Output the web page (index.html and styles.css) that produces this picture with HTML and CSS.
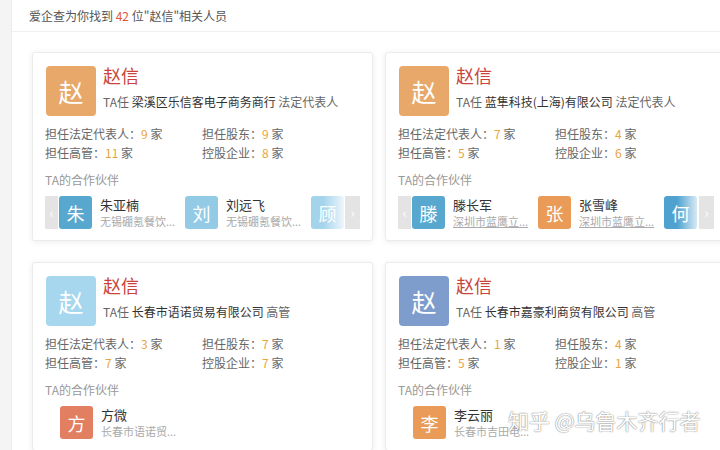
FILE: index.html
```html
<!DOCTYPE html>
<html lang="zh-CN">
<head>
<meta charset="utf-8">
<title>爱企查 - 赵信</title>
<link rel="stylesheet" href="styles.css">
</head>
<body>
<div class="page">
  <div class="strip"></div>
  <div class="panel">
    <div class="header">爱企查为你找到 <span class="count">42</span> 位"赵信"相关人员</div>
    <div class="grid">
      <div class="card">
        <div class="head">
          <div class="avatar orange">赵</div>
          <div class="info">
            <div class="name">赵信</div>
            <div class="role">TA任 <span class="company">梁溪区乐信客电子商务商行</span> 法定代表人</div>
          </div>
        </div>
        <div class="stats">
          <div>担任法定代表人：<span class="num">9</span> 家</div>
          <div>担任股东：<span class="num">9</span> 家</div>
          <div>担任高管：<span class="num">11</span> 家</div>
          <div>控股企业：<span class="num">8</span> 家</div>
        </div>
        <div class="label">TA的合作伙伴</div>
        <div class="carousel">
          <div class="arrow">‹</div>
          <div class="viewport fade">
            <div class="partner"><div class="pav blue">朱</div><div class="ptext"><div class="pname">朱亚楠</div><div class="psub">无锡硼氪餐饮...</div></div></div>
            <div class="partner"><div class="pav sky">刘</div><div class="ptext"><div class="pname">刘远飞</div><div class="psub">无锡硼氪餐饮...</div></div></div>
            <div class="partner"><div class="pav pale">顾</div></div>
          </div>
          <div class="arrow">›</div>
        </div>
      </div>

      <div class="card">
        <div class="head">
          <div class="avatar orange">赵</div>
          <div class="info">
            <div class="name">赵信</div>
            <div class="role">TA任 <span class="company">蓝隼科技(上海)有限公司</span> 法定代表人</div>
          </div>
        </div>
        <div class="stats">
          <div>担任法定代表人：<span class="num">7</span> 家</div>
          <div>担任股东：<span class="num">4</span> 家</div>
          <div>担任高管：<span class="num">5</span> 家</div>
          <div>控股企业：<span class="num">6</span> 家</div>
        </div>
        <div class="label">TA的合作伙伴</div>
        <div class="carousel">
          <div class="arrow">‹</div>
          <div class="viewport fade">
            <div class="partner"><div class="pav blue">滕</div><div class="ptext"><div class="pname">滕长军</div><div class="psub link">深圳市蓝鹰立...</div></div></div>
            <div class="partner"><div class="pav amber">张</div><div class="ptext"><div class="pname">张雪峰</div><div class="psub link">深圳市蓝鹰立...</div></div></div>
            <div class="partner"><div class="pav deep">何</div></div>
          </div>
          <div class="arrow">›</div>
        </div>
      </div>

      <div class="card">
        <div class="head">
          <div class="avatar light">赵</div>
          <div class="info">
            <div class="name">赵信</div>
            <div class="role">TA任 <span class="company">长春市语诺贸易有限公司</span> 高管</div>
          </div>
        </div>
        <div class="stats">
          <div>担任法定代表人：<span class="num">3</span> 家</div>
          <div>担任股东：<span class="num">7</span> 家</div>
          <div>担任高管：<span class="num">7</span> 家</div>
          <div>控股企业：<span class="num">7</span> 家</div>
        </div>
        <div class="label">TA的合作伙伴</div>
        <div class="carousel static">
          <div class="viewport">
            <div class="partner"><div class="pav salmon">方</div><div class="ptext"><div class="pname">方微</div><div class="psub">长春市语诺贸...</div></div></div>
          </div>
        </div>
      </div>

      <div class="card">
        <div class="head">
          <div class="avatar slate">赵</div>
          <div class="info">
            <div class="name">赵信</div>
            <div class="role">TA任 <span class="company">长春市嘉豪利商贸有限公司</span> 高管</div>
          </div>
        </div>
        <div class="stats">
          <div>担任法定代表人：<span class="num">1</span> 家</div>
          <div>担任股东：<span class="num">4</span> 家</div>
          <div>担任高管：<span class="num">5</span> 家</div>
          <div>控股企业：<span class="num">1</span> 家</div>
        </div>
        <div class="label">TA的合作伙伴</div>
        <div class="carousel static">
          <div class="viewport">
            <div class="partner"><div class="pav amber">李</div><div class="ptext"><div class="pname">李云丽</div><div class="psub">长春市吉田电...</div></div></div>
          </div>
        </div>
      </div>
    </div>
  </div>
</div>
<div class="watermark">知乎 @乌鲁木齐行者</div>
</body>
</html>
```
FILE: styles.css
```css
html, body {
  margin: 0;
  padding: 0;
  width: 720px;
  height: 450px;
  overflow: hidden;
  background: #ffffff;
  font-family: "Noto Sans CJK SC", "Liberation Sans", sans-serif;
  color: #666;
}

.page {
  display: flex;
  height: 450px;
}

.strip {
  width: 11px;
  flex: none;
  background: #f4f4f4;
  border-right: 1px solid #ececec;
}

.panel {
  flex: 1;
  min-width: 0;
  overflow: hidden;
  background: #fff;
}

.header {
  height: 31px;
  line-height: 31px;
  padding-left: 17px;
  font-size: 12px;
  color: #555;
  border-bottom: 1px solid #f0f0f0;
  white-space: nowrap;
}

.count {
  color: #e2573b;
}

.grid {
  display: grid;
  grid-template-columns: 341px 342px;
  column-gap: 12px;
  row-gap: 21px;
  padding: 20px 0 0 20px;
}

.card {
  border: 1px solid #ececec;
  border-radius: 3px;
  box-shadow: 0 1px 6px rgba(0, 0, 0, 0.08);
  padding: 13px 12px 11px 12px;
  background: #fff;
}

.head {
  display: flex;
  align-items: flex-start;
}

.avatar {
  width: 50px;
  height: 50px;
  border-radius: 4px;
  flex: none;
  display: flex;
  align-items: center;
  justify-content: center;
  color: #fff;
  font-size: 25px;
  line-height: 1;
  margin-left: 1px;
}

.orange { background: #e8a86a; }
.light { background: #a6d7ee; }
.slate { background: #7e9dcd; }

.info {
  margin-left: 7px;
  min-width: 0;
}

.name {
  font-size: 18px;
  line-height: 18px;
  color: #c9453b;
}

.role {
  margin-top: 9px;
  font-size: 12px;
  line-height: 18px;
  color: #666;
  white-space: nowrap;
}

.company {
  color: #333;
}

.stats {
  display: grid;
  grid-template-columns: 157px 1fr;
  margin-top: 8px;
  font-size: 12px;
  line-height: 19px;
  color: #666;
}

.num {
  color: #e8a53d;
}

.label {
  margin-top: 9px;
  font-size: 12px;
  line-height: 18px;
  color: #999;
}

.carousel {
  display: flex;
  height: 33px;
  margin-top: 7px;
}

.carousel.static {
  padding-left: 14px;
}

.arrow {
  flex: none;
  width: 13px;
  height: 33px;
  background: #e4e4e4;
  color: #fff;
  font-size: 14px;
  line-height: 33px;
  text-align: center;
}

.arrow:last-child {
  width: 15px;
}

.viewport {
  flex: 1;
  min-width: 0;
  display: flex;
  overflow: hidden;
  position: relative;
  padding-left: 1px;
}

.viewport.fade::after {
  content: "";
  position: absolute;
  right: 0;
  top: 0;
  width: 22px;
  height: 33px;
  background: linear-gradient(to right, rgba(255, 255, 255, 0), rgba(255, 255, 255, 0.85));
}

.partner {
  flex: none;
  width: 126px;
  display: flex;
  align-items: flex-start;
}

.pav {
  width: 33px;
  height: 33px;
  border-radius: 3px;
  flex: none;
  display: flex;
  align-items: center;
  justify-content: center;
  color: #fff;
  font-size: 18px;
  line-height: 1;
}

.blue { background: #58a7cf; }
.sky { background: #93cbe7; }
.pale { background: #a4d4ec; }
.deep { background: #4fa2d0; }
.amber { background: #e99b57; }
.salmon { background: #e27f60; }

.ptext {
  margin-left: 8px;
  min-width: 0;
  white-space: nowrap;
}

.pname {
  font-size: 13px;
  line-height: 17px;
  color: #333;
}

.psub {
  font-size: 11px;
  line-height: 16px;
  color: #aaa;
}

.psub.link {
  text-decoration: underline;
}

.watermark {
  position: absolute;
  left: 508px;
  top: 406px;
  font-size: 21px;
  line-height: 28px;
  color: #fff;
  white-space: nowrap;
  text-shadow: 0 0 1px rgba(0, 0, 0, 0.55), 0 0 2px rgba(0, 0, 0, 0.25);
}
```
